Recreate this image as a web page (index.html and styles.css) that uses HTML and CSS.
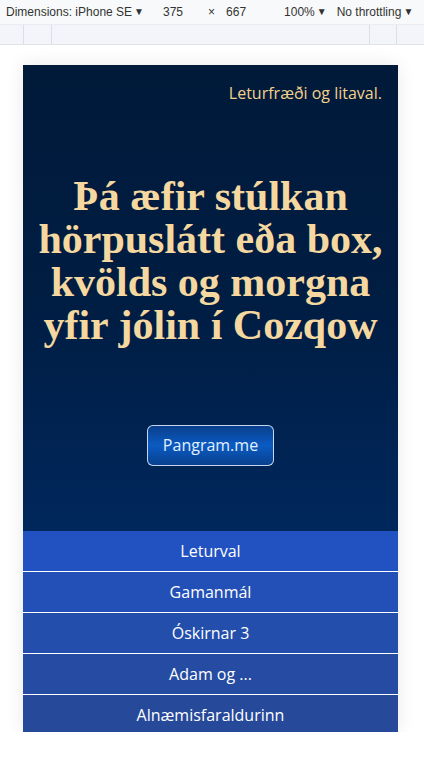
FILE: index.html
```html
<!DOCTYPE html>
<html lang="is">
<head>
<meta charset="utf-8">
<title>Pangram</title>
<link rel="stylesheet" href="styles.css">
</head>
<body>
<div class="devtools">
  <div class="dt-row1">
    <span class="dt-dim">Dimensions: iPhone SE<span class="caret">▼</span></span>
    <span class="dt-w">375</span>
    <span class="dt-x">×</span>
    <span class="dt-h">667</span>
    <span class="dt-zoom">100%<span class="caret">▼</span></span>
    <span class="dt-thr">No throttling<span class="caret">▼</span></span>
  </div>
  <div class="dt-row2">
    <div class="seg s1"></div>
    <div class="seg s2"></div>
    <div class="seg s3"></div>
    <div class="seg s4"></div>
    <div class="seg s5"></div>
  </div>
</div>
<div class="stage">
  <div class="phone">
    <section class="hero">
      <p class="tagline">Leturfræði og litaval.</p>
      <h1 class="title">Þá æfir stúlkan hörpuslátt eða box, kvölds og morgna yfir jólin í Cozqow</h1>
      <a class="btn" href="#">Pangram.me</a>
    </section>
    <nav class="menu">
      <a class="item i1" href="#">Leturval</a>
      <a class="item i2" href="#">Gamanmál</a>
      <a class="item i3" href="#">Óskirnar 3</a>
      <a class="item i4" href="#">Adam og ...</a>
      <a class="item i5" href="#">Alnæmisfaraldurinn</a>
    </nav>
  </div>
</div>
</body>
</html>
```
FILE: styles.css
```css
* { box-sizing: border-box; }
html, body { margin: 0; padding: 0; background: #ffffff; }
body { font-family: "Open Sans", "Noto Sans", sans-serif; overflow: hidden; }

.devtools { font-family: "Liberation Sans", Arial, sans-serif; color: #333; }
.dt-row1 {
  height: 24px;
  background: #f8f9fa;
  font-size: 12px;
  display: flex;
  align-items: center;
  white-space: nowrap;
}
.caret { font-size: 10px; margin-left: 2px; position: relative; top: -1px; }
.dt-dim { margin-left: 6px; }
.dt-w { margin-left: 19px; }
.dt-x { margin-left: 25px; }
.dt-h { margin-left: 11px; }
.dt-zoom { margin-left: 38px; }
.dt-thr { margin-left: 10px; }

.dt-row2 {
  height: 21px;
  background: #f3f5fa;
  border-top: 1px solid #e9ecf1;
  border-bottom: 1px solid #dfe2e7;
  display: flex;
}
.seg { border-right: 1px solid #dcdfe5; height: 100%; }
.s1 { width: 24px; }
.s2 { width: 28px; }
.s3 { width: 318px; }
.s4 { width: 27px; }
.s5 { flex: 1; border-right: none; }

.stage { padding: 20px 0 0 23px; }
.phone {
  width: 375px;
  height: 667px;
  overflow: hidden;
  box-shadow: 0 0 18px rgba(0, 0, 0, 0.09);
  display: flex;
  flex-direction: column;
}

.hero {
  height: 466px;
  flex: none;
  background: linear-gradient(to bottom, #011a3a 0%, #001d42 50%, #00275c 100%);
  display: flex;
  flex-direction: column;
  align-items: center;
  padding: 18px 16px 0 16px;
}
.tagline {
  align-self: flex-end;
  margin: 0;
  color: #f3d18c;
  font-size: 16px;
  line-height: 20px;
}
.title {
  margin: 72px -10px 0 -10px;
  font-family: "Liberation Serif", "DejaVu Serif", serif;
  font-weight: bold;
  font-size: 42px;
  line-height: 43px;
  text-align: center;
  color: #f4d8a0;
}
.btn {
  margin-top: 78px;
  display: inline-block;
  padding: 0 15px;
  height: 41px;
  line-height: 39px;
  border: 1px solid rgba(230, 240, 255, 0.85);
  border-radius: 6px;
  background: linear-gradient(to bottom, #093f8c 0%, #0b5bc2 50%, #08408e 100%);
  color: #e3f0ff;
  font-size: 16px;
  text-decoration: none;
}

.menu { display: flex; flex-direction: column; gap: 1px; background: #ffffff; }
.item {
  height: 40px;
  line-height: 40px;
  flex: none;
  text-align: center;
  color: #ffffff;
  font-size: 16px;
  text-decoration: none;
}
.i1 { background: #2252c2; }
.i2 { background: #2350b6; }
.i3 { background: #244eac; }
.i4 { background: #254ba2; }
.i5 { background: #26499a; }
```
